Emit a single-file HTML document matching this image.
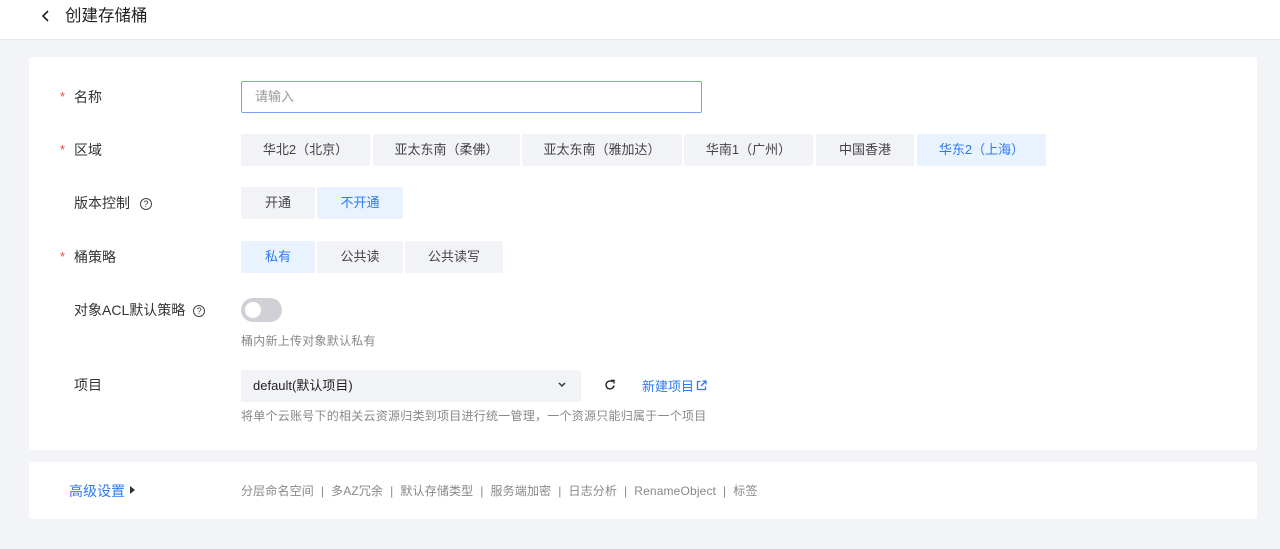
<!DOCTYPE html><html><head><meta charset="utf-8"><style>
*{margin:0;padding:0;box-sizing:border-box}
body{width:1280px;height:549px;background:#f3f4f8;font-family:"Liberation Sans","Noto Sans CJK SC",sans-serif;color:#333;position:relative;overflow:hidden;font-size:13px}
.a{position:absolute}
.hdr{left:0;top:0;width:1280px;height:40px;background:#fff;border-bottom:1px solid #e6e8ee}
.card{background:#fff;border-radius:3px;left:29px;width:1228px}
.lbl{font-size:14px;color:#333;line-height:20px}
.star{color:#e24c4c;font-size:13px;position:absolute;left:-14px}
.btn{height:32px;line-height:32px;text-align:center;background:#f2f3f7;color:#444;font-size:13px;border-radius:2px}
.on{background:#e8f3ff;color:#2f78f0}
.hint{font-size:12px;color:#888;letter-spacing:0.25px}
.q{display:inline-block;width:12px;height:12px;border:1.3px solid #444;border-radius:50%;font-size:9px;line-height:10px;text-align:center;vertical-align:1px}
</style></head><body>
<div class="a hdr"></div>
<svg class="a" style="left:41px;top:9px" width="10" height="14" viewBox="0 0 10 14"><path d="M7 2L2 7l5 5" fill="none" stroke="#222" stroke-width="1.6"/></svg>
<div class="a" style="left:65px;top:5px;font-size:16.5px;color:#222;line-height:22px">创建存储桶</div>
<div class="a card" style="top:57px;height:393px"></div>
<div class="a card" style="top:462px;height:57px"></div>

<div class="a lbl" style="left:74px;top:87px"><span class="star">*</span>名称</div>
<div class="a" style="left:241px;top:81px;width:461px;height:32px;border:1px solid #7a9ff5;border-radius:2px;padding-left:13px;line-height:30px;color:#999">请输入</div>

<div class="a lbl" style="left:74px;top:140px"><span class="star">*</span>区域</div>
<div class="a btn" style="left:241px;top:134px;width:129px">华北2（北京）</div>
<div class="a btn" style="left:373px;top:134px;width:147px">亚太东南（柔佛）</div>
<div class="a btn" style="left:522px;top:134px;width:160px">亚太东南（雅加达）</div>
<div class="a btn" style="left:684px;top:134px;width:129px">华南1（广州）</div>
<div class="a btn" style="left:816px;top:134px;width:98px">中国香港</div>
<div class="a btn on" style="left:917px;top:134px;width:129px">华东2（上海）</div>

<div class="a lbl" style="left:74px;top:193px">版本控制 <span class="q" style="margin-left:6px">?</span></div>
<div class="a btn" style="left:241px;top:187px;width:74px">开通</div>
<div class="a btn on" style="left:317px;top:187px;width:86px">不开通</div>

<div class="a lbl" style="left:74px;top:247px"><span class="star">*</span>桶策略</div>
<div class="a btn on" style="left:241px;top:241px;width:74px">私有</div>
<div class="a btn" style="left:317px;top:241px;width:86px">公共读</div>
<div class="a btn" style="left:405px;top:241px;width:98px">公共读写</div>

<div class="a lbl" style="left:74px;top:300px">对象ACL默认策略 <span class="q" style="margin-left:4px">?</span></div>
<div class="a" style="left:241px;top:298px;width:41px;height:24px;border-radius:12px;background:#cfd1d6"></div>
<div class="a" style="left:245px;top:302px;width:16px;height:16px;border-radius:50%;background:#fff"></div>
<div class="a hint" style="left:241px;top:332px">桶内新上传对象默认私有</div>

<div class="a lbl" style="left:74px;top:375px">项目</div>
<div class="a" style="left:241px;top:370px;width:340px;height:32px;background:#f2f3f7;border-radius:2px;padding-left:12px;line-height:32px;color:#222">default(默认项目)</div>
<svg class="a" style="left:558px;top:382px" width="8" height="6" viewBox="0 0 8 6"><path d="M1 1l3 3 3-3" fill="none" stroke="#333" stroke-width="1.5"/></svg>
<svg class="a" style="left:604px;top:379px" width="12" height="12" viewBox="0 0 12 12"><path d="M10 6.5A4 4 0 1 1 8.5 2.8" fill="none" stroke="#222" stroke-width="1.4"/><path d="M7 1.5h3v3" fill="none" stroke="#222" stroke-width="1.4"/></svg>
<div class="a" style="left:642px;top:376px;color:#2f78f0;font-size:13px">新建项目</div>
<svg class="a" style="left:696px;top:380px" width="11" height="11" viewBox="0 0 11 11"><path d="M4.5 1.5H1.5v8h8v-3M6.5 1h3.5v3.5M10 1L5 6" fill="none" stroke="#2f78f0" stroke-width="1.3"/></svg>
<div class="a hint" style="left:241px;top:407px">将单个云账号下的相关云资源归类到项目进行统一管理，一个资源只能归属于一个项目</div>

<div class="a" style="left:69px;top:481px;color:#2f78f0;font-size:14px">高级设置</div>
<div class="a" style="left:130px;top:486px;width:0;height:0;border-left:5px solid #333;border-top:4px solid transparent;border-bottom:4px solid transparent"></div>
<div class="a" style="left:241px;top:482px;font-size:12px;color:#888;letter-spacing:0.15px">分层命名空间 &nbsp;|&nbsp; 多AZ冗余 &nbsp;|&nbsp; 默认存储类型 &nbsp;|&nbsp; 服务端加密 &nbsp;|&nbsp; 日志分析 &nbsp;|&nbsp; RenameObject &nbsp;|&nbsp; 标签</div>
</body></html>
